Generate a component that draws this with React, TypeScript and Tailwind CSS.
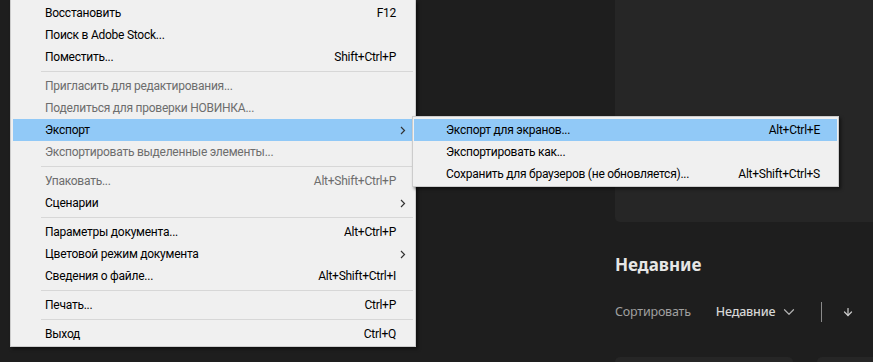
import { ChevronDown, ArrowDown } from 'lucide-react'

type MenuEntry =
  | { sep: true }
  | { sep?: false; label: string; shortcut?: string; disabled?: boolean; arrow?: boolean; active?: boolean }

const fileMenu: MenuEntry[] = [
  { label: 'Восстановить', shortcut: 'F12' },
  { label: 'Поиск в Adobe Stock...' },
  { label: 'Поместить...', shortcut: 'Shift+Ctrl+P' },
  { sep: true },
  { label: 'Пригласить для редактирования...', disabled: true },
  { label: 'Поделиться для проверки НОВИНКА...', disabled: true },
  { label: 'Экспорт', arrow: true, active: true },
  { label: 'Экспортировать выделенные элементы...', disabled: true },
  { sep: true },
  { label: 'Упаковать...', shortcut: 'Alt+Shift+Ctrl+P', disabled: true },
  { label: 'Сценарии', arrow: true },
  { sep: true },
  { label: 'Параметры документа...', shortcut: 'Alt+Ctrl+P' },
  { label: 'Цветовой режим документа', arrow: true },
  { label: 'Сведения о файле...', shortcut: 'Alt+Shift+Ctrl+I' },
  { sep: true },
  { label: 'Печать...', shortcut: 'Ctrl+P' },
  { sep: true },
  { label: 'Выход', shortcut: 'Ctrl+Q' },
]

const exportMenu: MenuEntry[] = [
  { label: 'Экспорт для экранов...', shortcut: 'Alt+Ctrl+E', active: true },
  { label: 'Экспортировать как...' },
  { label: 'Сохранить для браузеров (не обновляется)...', shortcut: 'Alt+Shift+Ctrl+S' },
]

function MenuRows({ items }: { items: MenuEntry[] }): JSX.Element {
  return (
    <>
      {items.map((item, i) =>
        item.sep ? (
          <div key={i} className="flex h-[7px] items-center pl-[28px]">
            <div className="h-px w-full bg-[#d7d7d7]" />
          </div>
        ) : (
          <div
            key={i}
            className={`flex h-[22px] items-center pl-[32px] pr-[17px] ${item.active ? 'bg-[#91c9f7]' : ''} ${
              item.disabled ? 'text-[#6d6d6d]' : 'text-black'
            }`}
          >
            <span className="flex-1 whitespace-nowrap">{item.label}</span>
            {item.shortcut ? <span className="whitespace-nowrap">{item.shortcut}</span> : null}
            {item.arrow ? (
              <svg width="6" height="9" viewBox="0 0 6 9" className="-mr-[10px]">
                <path d="M1 1l3.5 3.5L1 8" fill="none" stroke="#333" strokeWidth="1.2" />
              </svg>
            ) : null}
          </div>
        ),
      )}
    </>
  )
}

export default function App(): JSX.Element {
  return (
    <div className="relative flex h-[362px] w-[873px] overflow-hidden bg-[#1e1e1e] font-['Noto_Sans',sans-serif]">
      <div className="w-[615px] shrink-0" />
      <div className="flex flex-1 flex-col">
        <div className="h-[222px] shrink-0 rounded-bl-[5px] bg-[#262626]" />
        <h2 className="mt-[27px] shrink-0 text-[17px] font-bold leading-[32px] text-[#e6e6e6]">Недавние</h2>
        <div className="mt-[20px] flex h-[22px] shrink-0 items-center text-[12.5px]">
          <span className="tracking-[-0.2px] text-[#a0a0a0]">Сортировать</span>
          <span className="ml-[25px] font-medium tracking-[-0.2px] text-[#d6d6d6]">Недавние</span>
          <ChevronDown size={18} strokeWidth={1.6} className="ml-[5px] text-[#b0b0b0]" />
          <div className="ml-[23px] h-[20px] w-px bg-[#8a8a8a]" />
          <ArrowDown size={12} strokeWidth={2.5} className="ml-[20px] text-[#c8c8c8]" />
        </div>
        <div className="mt-[34px] flex shrink-0 gap-[24px]">
          <div className="h-[20px] w-[178px] rounded-[5px] bg-[#262626]" />
          <div className="h-[20px] w-[178px] rounded-[5px] bg-[#262626]" />
        </div>
      </div>

      <div className="absolute left-[10px] top-0 w-[406px] border border-t-0 border-[#cccccc] bg-[#f0f0f0] px-[2px] pb-[1px] pt-[2px] font-['Roboto',sans-serif] text-[12px] tracking-[-0.25px] shadow-[2px_2px_3px_rgba(0,0,0,0.5)]">
        <MenuRows items={fileMenu} />
      </div>

      <div className="absolute left-[412px] top-[116px] w-[427px] border border-[#cccccc] bg-[#f0f0f0] p-[1px] pt-[2px] font-['Roboto',sans-serif] text-[12px] tracking-[-0.25px] shadow-[2px_2px_3px_rgba(0,0,0,0.5)]">
        <MenuRows items={exportMenu} />
      </div>
    </div>
  )
}
